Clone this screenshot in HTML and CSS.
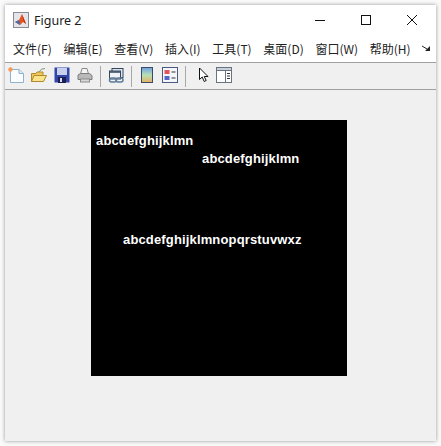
FILE: index.html
```html
<!DOCTYPE html>
<html lang="zh">
<head>
<meta charset="utf-8">
<title>Figure 2</title>
<link rel="stylesheet" href="styles.css">
</head>
<body>
<div class="window">
  <header class="titlebar">
    <svg class="app-icon" width="16" height="16" viewBox="0 0 16 16">
      <rect x="0.5" y="0.5" width="15" height="15" fill="#e4e4ea" stroke="#8a8a95"/>
      <path d="M2 10 L6 8 L9 2 L13 12 L10 10 L7 13 Z" fill="#e8541c"/>
      <path d="M2 10 L6 8 L7 13 Z" fill="#3d6fb5"/>
      <path d="M9 2 L13 12 L11 10 Z" fill="#a82a14"/>
    </svg>
    <span class="title">Figure 2</span>
    <div class="win-controls">
      <span class="win-btn"><svg width="12" height="12" viewBox="0 0 12 12"><path d="M1 6.5H11" stroke="#111" fill="none"/></svg></span>
      <span class="win-btn"><svg width="12" height="12" viewBox="0 0 12 12"><rect x="1.5" y="1.5" width="9" height="9" stroke="#111" fill="none"/></svg></span>
      <span class="win-btn"><svg width="12" height="12" viewBox="0 0 12 12"><path d="M1 1L11 11M11 1L1 11" stroke="#111" fill="none"/></svg></span>
    </div>
  </header>
  <nav class="menubar">
    <span>文件(F)</span><span>编辑(E)</span><span>查看(V)</span><span>插入(I)</span><span>工具(T)</span><span>桌面(D)</span><span>窗口(W)</span><span>帮助(H)</span>
    <svg class="more" width="9" height="7" viewBox="0 0 9 7"><path d="M0 1L5 4" stroke="#222" fill="none"/><path d="M8 1V6H3Z" fill="#222"/></svg>
  </nav>
  <div class="toolbar">
    <svg class="tool" width="16" height="16" viewBox="0 0 16 16"><path d="M2.5 2.5H11L15.5 6.5V15.5H2.5Z" fill="#fbfdff" stroke="#8fb3cf"/><path d="M11 2.5V6.5H15.5" fill="#dce9f3" stroke="#8fb3cf"/><circle cx="2.5" cy="2.5" r="2.2" fill="#f59a5a"/></svg>
    <svg class="tool t-gap" width="16" height="16" viewBox="0 0 16 16"><path d="M0.5 6.5H5L6 5H12V14.5H0.5Z" fill="#efc95a" stroke="#b08a2e"/><path d="M0.5 14.5L3 8.5H15.5L12.5 14.5Z" fill="#fbe38c" stroke="#b08a2e"/><path d="M8 5Q10 1 14 1.5" stroke="#7f9a6a" fill="none"/></svg>
    <svg class="tool t-gap" width="16" height="16" viewBox="0 0 16 16"><rect x="0.5" y="0.5" width="15" height="15" fill="#3345a8"/><rect x="3" y="1" width="10" height="7" fill="#c8d0ee"/><rect x="4" y="10" width="8" height="6" fill="#1b1f55"/><rect x="6" y="11" width="2" height="4" fill="#d8dcef"/></svg>
    <svg class="tool t-gap" width="16" height="16" viewBox="0 0 16 16"><path d="M5 1.5H10L11.5 7H3.5Z" fill="#f4f4f4" stroke="#8a8a8a"/><path d="M1 8L3.5 6.5H12.5L15 8.5V12.5H1Z" fill="#b9b9b9" stroke="#7c7c7c"/><rect x="3.5" y="12" width="9" height="3" fill="#d8d8d8" stroke="#8a8a8a"/></svg>
    <span class="sep sep-a"></span>
    <svg class="tool" width="17" height="17" viewBox="0 0 17 17"><rect x="4" y="1.5" width="11" height="9" fill="#dfe6ee" stroke="#33455e"/><rect x="1.5" y="4" width="11" height="8" fill="#eef2f6" stroke="#33455e"/><path d="M2 5H12" stroke="#33455e" stroke-width="1.5"/><rect x="1.5" y="11" width="7" height="4" rx="2" fill="none" stroke="#5c7a99" stroke-width="1.5"/><rect x="8" y="11" width="7" height="4" rx="2" fill="none" stroke="#5c7a99" stroke-width="1.5"/></svg>
    <span class="sep sep-b"></span>
    <svg class="tool" width="16" height="16" viewBox="0 0 16 16"><defs><linearGradient id="cb" x1="0" y1="0" x2="0" y2="1"><stop offset="0" stop-color="#6f9ee0"/><stop offset="0.5" stop-color="#b8e0b8"/><stop offset="1" stop-color="#e8b060"/></linearGradient></defs><rect x="1.5" y="0.5" width="11" height="15" fill="url(#cb)" stroke="#3c4a6a"/></svg>
    <svg class="tool t-gap2" width="16" height="16" viewBox="0 0 16 16"><rect x="0.5" y="0.5" width="15" height="15" fill="#f4f6fa" stroke="#4a5a80"/><rect x="2.5" y="3" width="5" height="4" fill="#e0555a"/><rect x="2.5" y="9" width="5" height="4" fill="#5566c8"/><path d="M9.5 5H13.5M9.5 11H13.5" stroke="#333"/></svg>
    <span class="sep sep-c"></span>
    <svg class="tool" width="12" height="16" viewBox="0 0 12 16"><path d="M1.5 1V12.5L4.2 10L6.2 14.5L8.2 13.5L6.2 9.5H10Z" fill="#fff" stroke="#111"/></svg>
    <svg class="tool t-gap3" width="16" height="16" viewBox="0 0 16 16"><rect x="0.5" y="0.5" width="15" height="15" fill="#fff" stroke="#6a7280"/><rect x="0.5" y="0.5" width="15" height="3" fill="#c9d2dc" stroke="#6a7280"/><path d="M9.5 3.5V15.5" stroke="#6a7280"/><path d="M11 6.5H14M11 9H14M11 11.5H14" stroke="#333"/></svg>
  </div>
  <main class="canvas">
    <div class="axes">
      <span class="label label-1">abcdefghijklmn</span>
      <span class="label label-2">abcdefghijklmn</span>
      <span class="label label-3">abcdefghijklmnopqrstuvwxz</span>
    </div>
  </main>
</div>
</body>
</html>
```
FILE: styles.css
```css
html, body {
  margin: 0;
  padding: 0;
  width: 441px;
  height: 446px;
  overflow: hidden;
  background: #fafafa;
}
body {
  padding: 5px 5px 5px 5px;
  box-sizing: border-box;
  font-family: "Noto Sans CJK SC", "Liberation Sans", sans-serif;
}
.window {
  height: 436px;
  display: flex;
  flex-direction: column;
  background: #f0f0f0;
  box-shadow: 0 0 4px rgba(0, 0, 0, 0.4);
}
.titlebar {
  height: 30px;
  flex: none;
  display: flex;
  align-items: center;
  background: #fff;
  padding: 0 1px 0 8px;
}
.title {
  margin-left: 5px;
  font: 12.5px "Noto Sans", "Liberation Sans", sans-serif;
  color: #1c1c1c;
}
.win-controls {
  margin-left: auto;
  display: flex;
}
.win-btn {
  width: 46px;
  height: 30px;
  display: flex;
  align-items: center;
  justify-content: center;
}
.menubar {
  height: 28px;
  flex: none;
  box-sizing: border-box;
  display: flex;
  align-items: center;
  gap: 11.7px;
  padding-left: 8px;
  background: #fff;
  border-bottom: 1px solid #a0a0a0;
  font-size: 12px;
  color: #222;
}
.more { margin-left: 0; }
.toolbar {
  height: 27px;
  flex: none;
  box-sizing: border-box;
  display: flex;
  align-items: center;
  padding-left: 3px;
  background: #f0f0f0;
  border-bottom: 1px solid #a0a0a0;
}
.tool { flex: none; margin-top: -2px; }
.t-gap { margin-left: 7px; }
.t-gap2 { margin-left: 6px; }
.t-gap3 { margin-left: 6px; }
.sep {
  width: 1px;
  height: 21px;
  background: #a8a8a8;
  flex: none;
}
.sep-a { margin: 0 7px 0 7px; }
.sep-b { margin: 0 8px 0 6px; }
.sep-c { margin: 0 12px 0 7px; }
.canvas {
  flex: 1;
  padding: 30px 0 0 86px;
}
.axes {
  position: relative;
  width: 256px;
  height: 256px;
  background: #000;
}
.label {
  position: absolute;
  font: bold 13px "Liberation Sans", sans-serif;
  letter-spacing: 0.15px;
  color: #fff;
  line-height: 14px;
  white-space: nowrap;
}
.label-1 { left: 5px; top: 14px; }
.label-2 { left: 111px; top: 32px; }
.label-3 { left: 32px; top: 113px; }
```
